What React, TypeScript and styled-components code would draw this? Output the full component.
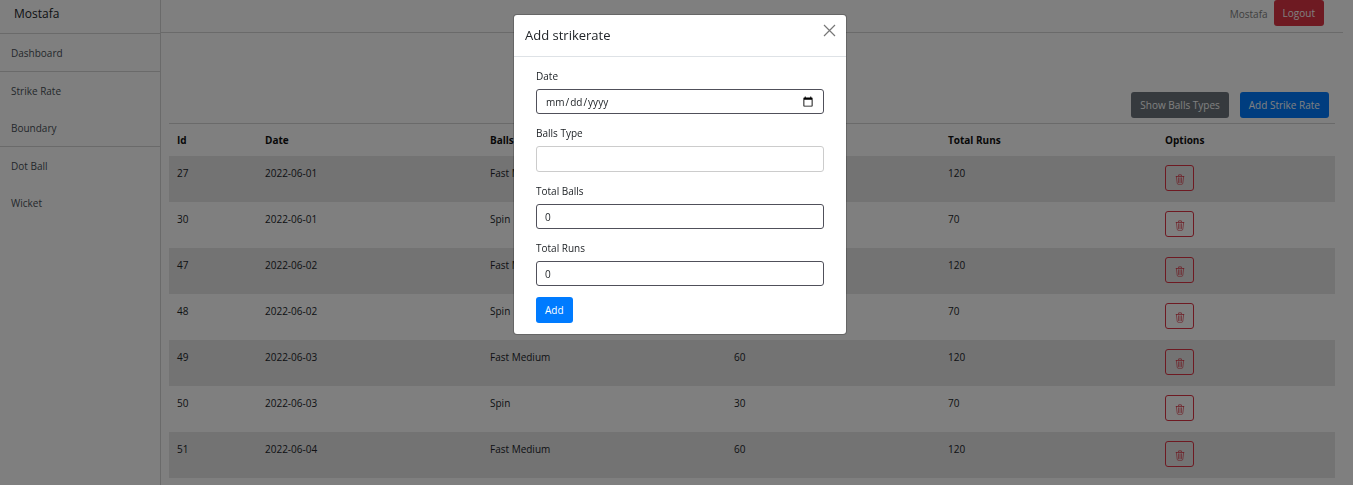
import React from "react";
import styled, { createGlobalStyle, css } from "styled-components";

const GlobalStyle = createGlobalStyle`
  *, *::before, *::after { box-sizing: border-box; }
  body {
    margin: 0;
    background: #fff;
    color: #212529;
    font-family: "Open Sans", "Noto Sans", sans-serif;
    font-size: 10px;
    line-height: 16px;
    overflow: hidden;
  }
  button, input { font: inherit; }
`;

const Layout = styled.div`
  display: flex;
  min-height: 100vh;
`;

const Sidebar = styled.aside`
  flex: 0 0 161px;
  border-right: 1px solid #d4d4d4;
`;

const Brand = styled.div`
  height: 34px;
  padding: 4px 14px;
  border-bottom: 1px solid #d4d4d4;
  font-size: 12px;
  line-height: 20px;
`;

const NavLink = styled.a<{ $ruled?: boolean }>`
  display: flex;
  align-items: center;
  height: ${(p) => (p.$ruled ? 38 : 37)}px;
  padding: 0 11px;
  border-bottom: ${(p) => (p.$ruled ? "1px solid #d4d4d4" : "none")};
  color: #495057;
  text-decoration: none;
`;

const Main = styled.main`
  flex: 1;
  min-width: 0;
`;

const Topbar = styled.header`
  display: flex;
  justify-content: flex-end;
  align-items: flex-start;
  gap: 6px;
  height: 33px;
  margin-right: 10px;
  padding-right: 19px;
  border-bottom: 1px solid #d4d4d4;
`;

const UserName = styled.span`
  padding-top: 6px;
  color: #7f7f7f;
`;

const tones = { primary: "#007bff", secondary: "#6c757d", danger: "#dc3545" };

const Button = styled.button<{ $tone: keyof typeof tones }>`
  height: 26px;
  padding: 0 9px;
  border: 0;
  border-radius: 3px;
  background: ${(p) => tones[p.$tone]};
  color: #fff;
  white-space: nowrap;
  cursor: pointer;
`;

const Content = styled.section`
  padding: 59px 18px 0 8px;
`;

const Actions = styled.div`
  display: flex;
  justify-content: flex-end;
  gap: 11px;
  padding: 0 6px 5px 0;
`;

const Table = styled.table`
  width: 100%;
  table-layout: fixed;
  border-collapse: separate;
  border-spacing: 0;
  border-top: 1px solid #d4d4d4;
  text-align: left;
`;

const HeadCell = styled.th`
  height: 32px;
  padding: 0 8px;
  color: #111;
  font-weight: 700;
`;

const Row = styled.tr`
  &:nth-child(odd) { background: #e6e6e6; }
`;

const Cell = styled.td`
  height: 46px;
  padding: 9px 8px 0;
  vertical-align: top;
`;

const DeleteButton = styled.button`
  display: flex;
  align-items: center;
  justify-content: center;
  width: 29px;
  height: 26px;
  padding: 2px 0 0;
  border: 1px solid #dc3545;
  border-radius: 3px;
  background: transparent;
  color: #dc3545;
  cursor: pointer;
`;

const Backdrop = styled.div`
  position: fixed;
  inset: 0;
  display: flex;
  justify-content: center;
  align-items: flex-start;
  padding: 14px 0 0 7px;
  background: rgba(0, 0, 0, 0.5);
`;

const Dialog = styled.div`
  width: 334px;
  border: 1px solid rgba(0, 0, 0, 0.2);
  border-radius: 4px;
  background: #fff;
  background-clip: padding-box;
`;

const DialogHeader = styled.div`
  display: flex;
  justify-content: space-between;
  align-items: flex-start;
  padding: 9px 10px 10px 11px;
  border-bottom: 1px solid #dee2e6;
`;

const DialogTitle = styled.h2`
  margin: 0;
  font-size: 13px;
  line-height: 22px;
  font-weight: 500;
`;

const CloseButton = styled.button`
  display: flex;
  padding: 0;
  border: 0;
  background: none;
  color: #777;
  cursor: pointer;
`;

const Form = styled.form`
  padding: 11px 22px;
`;

const Field = styled.div`
  display: flex;
  flex-direction: column;
  gap: 5px;
  margin-bottom: 11px;
`;

const Label = styled.label`
  color: #212529;
`;

const Input = styled.input<{ $light?: boolean }>`
  width: 100%;
  height: ${(p) => (p.$light ? 26 : 25)}px;
  padding: 0 8px;
  border: 1px solid ${(p) => (p.$light ? "#ccc" : "#50505a")};
  border-radius: 3px;
  background: #fff;
  color: #212529;
  outline: none;
  ${(p) =>
    p.type === "date" &&
    css`
      &::-webkit-datetime-edit-fields-wrapper { padding: 0; }
      &::-webkit-calendar-picker-indicator { width: 12px; height: 12px; padding: 1px; }
    `}
`;

const TrashIcon = () => (
  <svg width="10" height="11" viewBox="0 0 16 16" fill="currentColor" aria-hidden="true">
    <path d="M6.5 1h3a.5.5 0 0 1 .5.5v1H6v-1a.5.5 0 0 1 .5-.5M11 2.5v-1A1.5 1.5 0 0 0 9.5 0h-3A1.5 1.5 0 0 0 5 1.5v1H1.5a.5.5 0 0 0 0 1h.538l.853 10.66A2 2 0 0 0 4.885 16h6.23a2 2 0 0 0 1.994-1.84l.853-10.66h.538a.5.5 0 0 0 0-1zm1.958 1-.846 10.58a1 1 0 0 1-.997.92h-6.23a1 1 0 0 1-.997-.92L3.042 3.5zm-7.487 1a.5.5 0 0 1 .528.47l.5 8.5a.5.5 0 0 1-.998.06L5 5.03a.5.5 0 0 1 .47-.53Zm5.058 0a.5.5 0 0 1 .47.53l-.5 8.5a.5.5 0 1 1-.998-.06l.5-8.5a.5.5 0 0 1 .528-.47M8 4.5a.5.5 0 0 1 .5.5v8.5a.5.5 0 0 1-1 0V5a.5.5 0 0 1 .5-.5" />
  </svg>
);

const CloseIcon = () => (
  <svg width="13" height="13" viewBox="0 0 13 13" fill="none" stroke="currentColor" strokeWidth="1.2" aria-hidden="true">
    <path d="M1 1 12 12M12 1 1 12" />
  </svg>
);

const nav = [
  { label: "Dashboard", ruled: true },
  { label: "Strike Rate" },
  { label: "Boundary", ruled: true },
  { label: "Dot Ball" },
  { label: "Wicket", ruled: false },
];

const rows = [
  { id: 27, date: "2022-06-01", type: "Fast Medium", balls: 60, runs: 120 },
  { id: 30, date: "2022-06-01", type: "Spin", balls: 30, runs: 70 },
  { id: 47, date: "2022-06-02", type: "Fast Medium", balls: 60, runs: 120 },
  { id: 48, date: "2022-06-02", type: "Spin", balls: 30, runs: 70 },
  { id: 49, date: "2022-06-03", type: "Fast Medium", balls: 60, runs: 120 },
  { id: 50, date: "2022-06-03", type: "Spin", balls: 30, runs: 70 },
  { id: 51, date: "2022-06-04", type: "Fast Medium", balls: 60, runs: 120 },
];

export default function App() {
  return (
    <>
      <GlobalStyle />
      <Layout>
        <Sidebar>
          <Brand>Mostafa</Brand>
          <nav>
            {nav.map((item) => (
              <NavLink key={item.label} href="#" $ruled={item.ruled}>
                {item.label}
              </NavLink>
            ))}
          </nav>
        </Sidebar>
        <Main>
          <Topbar>
            <UserName>Mostafa</UserName>
            <Button type="button" $tone="danger">Logout</Button>
          </Topbar>
          <Content>
            <Actions>
              <Button type="button" $tone="secondary">Show Balls Types</Button>
              <Button type="button" $tone="primary">Add Strike Rate</Button>
            </Actions>
            <Table>
              <colgroup>
                <col width="88" />
                <col width="225" />
                <col width="244" />
                <col width="214" />
                <col width="217" />
                <col />
              </colgroup>
              <thead>
                <tr>
                  {["Id", "Date", "Balls Type", "Total Balls", "Total Runs", "Options"].map((h) => (
                    <HeadCell key={h} scope="col">{h}</HeadCell>
                  ))}
                </tr>
              </thead>
              <tbody>
                {rows.map((r) => (
                  <Row key={r.id}>
                    <Cell>{r.id}</Cell>
                    <Cell>{r.date}</Cell>
                    <Cell>{r.type}</Cell>
                    <Cell>{r.balls}</Cell>
                    <Cell>{r.runs}</Cell>
                    <Cell>
                      <DeleteButton type="button" aria-label={`Delete ${r.id}`}>
                        <TrashIcon />
                      </DeleteButton>
                    </Cell>
                  </Row>
                ))}
              </tbody>
            </Table>
          </Content>
        </Main>
      </Layout>
      <Backdrop>
        <Dialog role="dialog" aria-modal="true" aria-labelledby="dialog-title">
          <DialogHeader>
            <DialogTitle id="dialog-title">Add strikerate</DialogTitle>
            <CloseButton type="button" aria-label="Close">
              <CloseIcon />
            </CloseButton>
          </DialogHeader>
          <Form onSubmit={(e) => e.preventDefault()}>
            <Field>
              <Label htmlFor="date">Date</Label>
              <Input id="date" type="date" />
            </Field>
            <Field>
              <Label htmlFor="balls-type">Balls Type</Label>
              <Input id="balls-type" type="text" $light />
            </Field>
            <Field>
              <Label htmlFor="total-balls">Total Balls</Label>
              <Input id="total-balls" type="number" defaultValue={0} />
            </Field>
            <Field>
              <Label htmlFor="total-runs">Total Runs</Label>
              <Input id="total-runs" type="number" defaultValue={0} />
            </Field>
            <Button type="submit" $tone="primary">Add</Button>
          </Form>
        </Dialog>
      </Backdrop>
    </>
  );
}
